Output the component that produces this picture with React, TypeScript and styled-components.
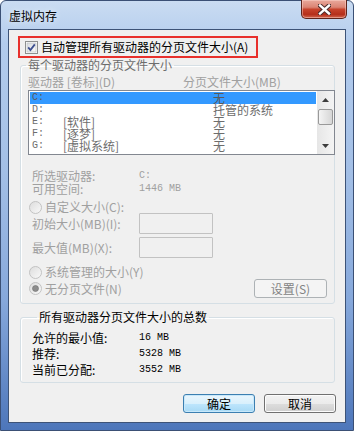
import React from "react";
import styled, { createGlobalStyle, css } from "styled-components";

const GlobalStyle = createGlobalStyle`
  html, body {
    margin: 0;
    padding: 0;
    background: #fff;
  }
  body {
    font-family: "Noto Sans CJK SC", "Liberation Sans", sans-serif;
    font-size: 12px;
    color: #000;
  }
  * {
    box-sizing: border-box;
  }
`;

const Window = styled.div`
  width: 354px;
  height: 431px;
  display: flex;
  flex-direction: column;
  padding: 0 7px 7px;
  border: 1px solid #3b5075;
  border-radius: 6px 6px 0 0;
  background: linear-gradient(
    180deg,
    #cadcf2 0%,
    #b3cced 10%,
    #a3bfe6 40%,
    #86a8db 70%,
    #4d76ba 100%
  );
`;

const TitleBar = styled.div`
  height: 28px;
  display: flex;
  align-items: center;
  justify-content: space-between;
`;

const Title = styled.span`
  margin-left: 1px;
  margin-top: 1px;
  line-height: 14px;
  color: #000;
  text-shadow: 0 0 6px rgba(255, 255, 255, 0.9);
`;

const CloseButton = styled.div`
  align-self: flex-start;
  width: 46px;
  height: 19px;
  margin: -1px -1px 0 0;
  display: flex;
  align-items: center;
  justify-content: center;
  border: 1px solid #5e241c;
  border-top: none;
  border-radius: 0 0 5px 5px;
  background: linear-gradient(
    180deg,
    #e9a99c 0%,
    #db8474 40%,
    #c7432c 52%,
    #b52f1b 80%,
    #d2664f 100%
  );
  box-shadow: inset 0 0 0 1px rgba(255, 220, 210, 0.45);
`;

const Client = styled.div`
  flex: 1;
  display: flex;
  flex-direction: column;
  background: #f0f0f0;
  border: 1px solid #3d5377;
  padding: 6px 10px 0 11px;
`;

const AutoBox = styled.div`
  width: 240px;
  height: 22px;
  margin-left: -2px;
  display: flex;
  align-items: center;
  gap: 3px;
  padding-left: 5px;
  border: 2px solid #e8302c;
  line-height: 14px;
`;

const Group = styled.fieldset`
  margin: 0;
  min-width: 0;
  padding: 0 0 5px 0;
  border: 1px solid #d5dfe5;
  border-radius: 3px;
  box-shadow: inset 1px 1px 0 #fff;
`;

const Group2 = styled(Group)`
  margin-top: 6px;
  padding: 5px 0 5px 11px;
`;

const GroupLegend = styled.legend<{ $muted?: boolean }>`
  margin-left: 5px;
  padding: 0 2px;
  line-height: 14px;
  color: ${(p) => (p.$muted ? "#6d6d6d" : "#000")};
`;

const GroupInner = styled.div`
  display: flex;
  flex-direction: column;
  padding-left: 7px;
`;

const ColumnHeaders = styled.div`
  display: grid;
  grid-template-columns: 155px auto;
  margin: 4px 0 2px;
  line-height: 12px;
  color: #a0a0a0;
`;

const ListBox = styled.div`
  height: 65px;
  margin-right: -1px;
  display: flex;
  border: 1px solid #828790;
  background: #fff;
`;

const ListRows = styled.div`
  flex: 1;
  padding: 1px;
`;

const ListRow = styled.div<{ $selected?: boolean }>`
  height: 12px;
  display: grid;
  grid-template-columns: 31px 150px 1fr;
  padding-left: 2px;
  line-height: 12px;
  color: #6d6d6d;
  white-space: nowrap;
  ${(p) =>
    p.$selected &&
    css`
      background: #3399ff;
      color: #5a5a5a;
    `}
`;

const Mono = styled.span`
  font-family: "Liberation Mono", "DejaVu Sans Mono", monospace;
  font-size: 10px;
`;

const ScrollBar = styled.div`
  width: 17px;
  display: flex;
  flex-direction: column;
  align-items: center;
  background: linear-gradient(90deg, #e6e6e6, #f4f4f4);
`;

const ScrollArrow = styled.div`
  height: 17px;
  width: 17px;
  display: flex;
  align-items: center;
  justify-content: center;
`;

const ScrollThumb = styled.div`
  width: 15px;
  height: 16px;
  margin-top: 1px;
  border: 1px solid #999;
  border-radius: 2px;
  background: linear-gradient(90deg, #f4f4f4, #e2e2e2 60%, #d6d6d6);
`;

const ScrollSpacer = styled.div`
  flex: 1;
`;

const InfoGrid = styled.div<{ $muted?: boolean; $row: number }>`
  display: grid;
  grid-template-columns: 107px auto;
  grid-auto-rows: ${(p) => p.$row}px;
  align-items: center;
  color: ${(p) => (p.$muted ? "#a0a0a0" : "#000")};
`;

const SelectedInfo = styled(InfoGrid)`
  margin: 14px 0 0 4px;
`;

const RadioRow = styled.div<{ $top: number; $height: number }>`
  height: ${(p) => p.$height}px;
  margin-top: ${(p) => p.$top}px;
  margin-left: 1px;
  display: flex;
  align-items: center;
  gap: 3px;
  color: #a0a0a0;
  line-height: 12px;
`;

const SizeRow = styled.div<{ $top: number }>`
  display: grid;
  grid-template-columns: 107px 74px;
  align-items: center;
  height: 21px;
  margin: ${(p) => p.$top}px 0 0 4px;
  color: #a0a0a0;
`;

const TextBox = styled.div`
  width: 74px;
  height: 21px;
  border: 1px solid #c2c2c2;
  border-radius: 1px;
  background: #f0f0f0;
`;

const NoPagingRow = styled.div`
  height: 19px;
  display: flex;
  align-items: center;
  justify-content: space-between;
  margin-right: 7px;
`;

const NoPagingRadio = styled(RadioRow)`
  margin-top: 0;
`;

const DialogButton = styled.div<{ $variant: "default" | "normal" | "disabled" }>`
  width: 72px;
  height: 19px;
  display: flex;
  align-items: center;
  justify-content: center;
  border-radius: 3px;
  line-height: 12px;
  ${(p) =>
    p.$variant === "default" &&
    css`
      border: 1px solid #3c7fb1;
      background: linear-gradient(180deg, #eaf6fd 0%, #d9f0fc 50%, #bee6fd 51%, #a7d9f5 100%);
      box-shadow: inset 0 0 0 1px #c8e8fa;
      color: #000;
    `}
  ${(p) =>
    p.$variant === "normal" &&
    css`
      border: 1px solid #707070;
      background: linear-gradient(180deg, #f2f2f2 0%, #ebebeb 50%, #dddddd 51%, #cfcfcf 100%);
      box-shadow: inset 0 0 0 1px #fcfcfc;
      color: #000;
    `}
  ${(p) =>
    p.$variant === "disabled" &&
    css`
      border: 1px solid #adb2b5;
      background: #f4f4f4;
      color: #838383;
    `}
`;

const SetButton = styled(DialogButton)`
  width: 73px;
`;

const ButtonRow = styled.div`
  display: flex;
  justify-content: flex-end;
  gap: 9px;
  margin: 11px -1px 0 0;
`;

function CheckBox() {
  return (
    <svg width="13" height="13" viewBox="0 0 13 13">
      <defs>
        <linearGradient id="cbg" x1="0" y1="0" x2="1" y2="1">
          <stop offset="0" stopColor="#d8dbe0" />
          <stop offset="1" stopColor="#fbfbfb" />
        </linearGradient>
      </defs>
      <rect x="0.5" y="0.5" width="12" height="12" fill="#fff" stroke="#8e8f8f" />
      <rect x="2" y="2" width="9" height="9" fill="url(#cbg)" stroke="#b4b8bd" strokeWidth="0.6" />
      <path d="M3.2 6.4 L5.4 9 L9.8 3.4" fill="none" stroke="#3d4f8f" strokeWidth="1.8" />
    </svg>
  );
}

function Radio({ checked }: { checked?: boolean }) {
  return (
    <svg width="13" height="13" viewBox="0 0 13 13">
      <defs>
        <linearGradient id="rbg" x1="0" y1="0" x2="1" y2="1">
          <stop offset="0" stopColor="#dcdcdc" />
          <stop offset="1" stopColor="#fafafa" />
        </linearGradient>
      </defs>
      <circle cx="6.5" cy="6.5" r="6" fill="url(#rbg)" stroke="#c2c2c2" />
      {checked && <circle cx="6.5" cy="6.5" r="3" fill="#8d8d8d" stroke="#6f6f6f" strokeWidth="0.6" />}
    </svg>
  );
}

function CloseGlyph() {
  return (
    <svg width="13" height="11" viewBox="0 0 13 11">
      <path d="M2 1.5 L11 9.5 M11 1.5 L2 9.5" stroke="#4a2a2a" strokeWidth="4.4" strokeLinecap="square" />
      <path d="M2 1.5 L11 9.5 M11 1.5 L2 9.5" stroke="#fff" strokeWidth="2.4" strokeLinecap="square" />
    </svg>
  );
}

function Arrow({ down }: { down?: boolean }) {
  return (
    <svg width="7" height="4" viewBox="0 0 7 4">
      <path d={down ? "M0 0 H7 L3.5 4 Z" : "M0 4 H7 L3.5 0 Z"} fill="#3c3c3c" />
    </svg>
  );
}

const drives = [
  { drive: "C:", label: "", size: "无" },
  { drive: "D:", label: "", size: "托管的系统" },
  { drive: "E:", label: "[软件]", size: "无" },
  { drive: "F:", label: "[逐梦]", size: "无" },
  { drive: "G:", label: "[虚拟系统]", size: "无" },
];

const totals = [
  { label: "允许的最小值:", value: "16 MB" },
  { label: "推荐:", value: "5328 MB" },
  { label: "当前已分配:", value: "3552 MB" },
];

export default function App() {
  return (
    <>
      <GlobalStyle />
      <Window>
        <TitleBar>
          <Title>虚拟内存</Title>
          <CloseButton>
            <CloseGlyph />
          </CloseButton>
        </TitleBar>
        <Client>
          <AutoBox>
            <CheckBox />
            <span>自动管理所有驱动器的分页文件大小(A)</span>
          </AutoBox>

          <Group>
            <GroupLegend $muted>每个驱动器的分页文件大小</GroupLegend>
            <GroupInner>
              <ColumnHeaders>
                <span>驱动器 [卷标](D)</span>
                <span>分页文件大小(MB)</span>
              </ColumnHeaders>
              <ListBox>
                <ListRows>
                  {drives.map((d, i) => (
                    <ListRow key={d.drive} $selected={i === 0}>
                      <Mono>{d.drive}</Mono>
                      <span>{d.label}</span>
                      <span>{d.size}</span>
                    </ListRow>
                  ))}
                </ListRows>
                <ScrollBar>
                  <ScrollArrow>
                    <Arrow />
                  </ScrollArrow>
                  <ScrollThumb />
                  <ScrollSpacer />
                  <ScrollArrow>
                    <Arrow down />
                  </ScrollArrow>
                </ScrollBar>
              </ListBox>

              <SelectedInfo $muted $row={13}>
                <span>所选驱动器:</span>
                <Mono>C:</Mono>
                <span>可用空间:</span>
                <Mono>1446 MB</Mono>
              </SelectedInfo>

              <RadioRow $top={6} $height={12}>
                <Radio />
                <span>自定义大小(C):</span>
              </RadioRow>
              <SizeRow $top={0}>
                <span>初始大小(MB)(I):</span>
                <TextBox />
              </SizeRow>
              <SizeRow $top={3}>
                <span>最大值(MB)(X):</span>
                <TextBox />
              </SizeRow>
              <RadioRow $top={7} $height={14}>
                <Radio />
                <span>系统管理的大小(Y)</span>
              </RadioRow>
              <NoPagingRow>
                <NoPagingRadio $top={0} $height={19}>
                  <Radio checked />
                  <span>无分页文件(N)</span>
                </NoPagingRadio>
                <SetButton $variant="disabled">设置(S)</SetButton>
              </NoPagingRow>
            </GroupInner>
          </Group>

          <Group2>
            <GroupLegend>所有驱动器分页文件大小的总数</GroupLegend>
            <InfoGrid $row={16}>
              {totals.map((t) => (
                <React.Fragment key={t.label}>
                  <span>{t.label}</span>
                  <Mono>{t.value}</Mono>
                </React.Fragment>
              ))}
            </InfoGrid>
          </Group2>

          <ButtonRow>
            <DialogButton $variant="default">确定</DialogButton>
            <DialogButton $variant="normal">取消</DialogButton>
          </ButtonRow>
        </Client>
      </Window>
    </>
  );
}
